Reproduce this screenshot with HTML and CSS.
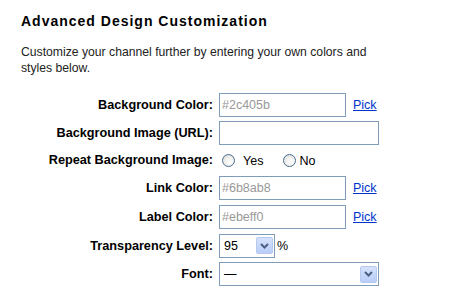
FILE: index.html
```html
<!DOCTYPE html>
<html>
<head>
<meta charset="utf-8">
<link rel="stylesheet" href="styles.css">
</head>
<body>
<div class="panel">
  <h2 class="title">Advanced Design Customization</h2>
  <p class="intro">Customize your channel further by entering your own colors and styles below.</p>
  <div class="form">
    <div class="lbl r28">Background Color:</div>
    <div class="ctl"><span class="input short muted">#2c405b</span><a class="pick" href="#">Pick</a></div>

    <div class="lbl r28">Background Image (URL):</div>
    <div class="ctl"><span class="input long"></span></div>

    <div class="lbl r26">Repeat Background Image:</div>
    <div class="ctl"><span class="radio"></span><span class="rtext">Yes</span><span class="radio second"></span><span class="rtext no">No</span></div>

    <div class="lbl r29">Link Color:</div>
    <div class="ctl"><span class="input short muted">#6b8ab8</span><a class="pick" href="#">Pick</a></div>

    <div class="lbl r29">Label Color:</div>
    <div class="ctl"><span class="input short muted">#ebeff0</span><a class="pick" href="#">Pick</a></div>

    <div class="lbl r29">Transparency Level:</div>
    <div class="ctl"><span class="select small"><span class="val">95</span><span class="btn"><svg width="9" height="6" viewBox="0 0 9 6"><path d="M1 1 L4.5 4.5 L8 1" fill="none" stroke="#4d6185" stroke-width="2"/></svg></span></span><span class="pct">%</span></div>

    <div class="lbl r28">Font:</div>
    <div class="ctl"><span class="select long"><span class="val">—</span><span class="btn"><svg width="9" height="6" viewBox="0 0 9 6"><path d="M1 1 L4.5 4.5 L8 1" fill="none" stroke="#4d6185" stroke-width="2"/></svg></span></span></div>
  </div>
</div>
</body>
</html>
```

FILE: styles.css
```css
html, body {
  margin: 0;
  padding: 0;
  background: #fff;
}
body {
  font-family: "Liberation Sans", Arial, sans-serif;
  font-size: 12px;
  color: #000;
}
.panel {
  padding: 13px 0 0 21px;
}
.title {
  margin: 0;
  font-size: 14px;
  line-height: 17px;
  font-weight: bold;
  letter-spacing: 1px;
  color: #000;
}
.intro {
  margin: 14px 0 0 0;
  width: 370px;
  font-size: 12.2px;
  line-height: 16px;
  color: #222;
}
.form {
  margin-top: 15px;
  display: grid;
  grid-template-columns: 192px auto;
  column-gap: 6px;
}
.lbl {
  font-weight: bold;
  font-size: 12.7px;
  text-align: right;
  display: flex;
  align-items: center;
  justify-content: flex-end;
}
.r26 { height: 26px; }
.r28 { height: 28px; }
.r29 { height: 29px; }
.ctl {
  display: flex;
  align-items: center;
}
.input {
  box-sizing: border-box;
  height: 24px;
  border: 1px solid #7f9db9;
  background: #fff;
  padding: 0 2px;
  display: flex;
  align-items: center;
  font-size: 12.5px;
}
.input.short { width: 127px; }
.input.long { width: 160px; }
.muted { color: #999; }
.pick {
  margin-left: 7px;
  color: #0033cc;
  text-decoration: underline;
  font-size: 12.5px;
}
.radio {
  box-sizing: border-box;
  width: 13px;
  height: 13px;
  border-radius: 50%;
  border: 1px solid #4a6d93;
  background: radial-gradient(circle at 60% 65%, #ffffff 0%, #f2f2ef 40%, #d6d6d0 100%);
  margin-left: 3px;
}
.radio.second { margin-left: 20px; }
.rtext {
  margin-left: 8px;
  margin-top: 2px;
  font-size: 12.5px;
}
.rtext.no { margin-left: 3px; }
.select {
  box-sizing: border-box;
  height: 24px;
  border: 1px solid #7f9db9;
  background: #fff;
  display: flex;
  align-items: center;
  justify-content: space-between;
  padding: 0 1px 0 4px;
}
.select.small { width: 56px; }
.select.long { width: 160px; }
.val { font-size: 12.5px; }
.btn {
  box-sizing: border-box;
  width: 17px;
  height: 17px;
  border: 1px solid #b8c9ef;
  border-radius: 2px;
  background: linear-gradient(#d6e2fb, #b9cdf7);
  display: flex;
  align-items: center;
  justify-content: center;
}
.pct { margin-left: 2px; font-size: 12.5px; }
```
